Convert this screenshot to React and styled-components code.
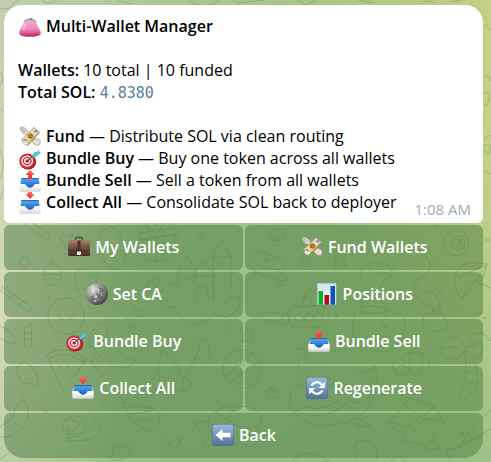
import React from "react";
import styled, { createGlobalStyle, css } from "styled-components";

const GlobalStyle = createGlobalStyle`
  * { box-sizing: border-box; }
  body {
    margin: 0;
    font-family: "Open Sans", "Noto Sans", sans-serif;
    font-size: 16px;
    line-height: 22px;
    color: #000;
  }
`;

const Chat = styled.main`
  position: relative;
  isolation: isolate;
  min-height: 100vh;
  padding: 5px 8px 4px 4px;
  overflow: hidden;
  background:
    radial-gradient(ellipse 60% 60% at 48% 60%, rgba(152, 192, 142, 0.85), rgba(152, 192, 142, 0)),
    linear-gradient(to bottom, rgba(152, 194, 142, 0) 45%, rgba(148, 190, 136, 0.85)),
    linear-gradient(to right, #c3d0b0 0%, #a8c792 35%, #a9c584 65%, #c4d087 100%);
`;

const Wash = styled.div`
  position: absolute;
  z-index: -2;
  inset: 0;
  background: radial-gradient(ellipse 28% 62% at 0 68%, rgba(222, 222, 190, 0.85), rgba(222, 222, 190, 0));
`;

const Doodles = styled.svg`
  position: absolute;
  z-index: -1;
  inset: 0;
  width: 100%;
  height: 100%;
  fill: none;
  stroke: #55893e;
  stroke-width: 1;
  stroke-linecap: round;
  stroke-linejoin: round;
  opacity: 0.34;
`;

const Bubble = styled.article`
  display: flex;
  align-items: flex-end;
  justify-content: space-between;
  padding: 10px 12px 4px 14px;
  border-radius: 18px 18px 6px 6px;
  background: #fff;
`;

const Title = styled.h1`
  margin: 0 0 22px;
  font-size: 16px;
  line-height: 22px;
  font-weight: 600;
`;

const Line = styled.p`
  margin: 0;
`;

const Actions = styled.ul`
  margin: 22px 0 0;
  padding: 0;
  list-style: none;
`;

const Strong = styled.strong`
  font-weight: 600;
`;

const Amount = styled.code`
  font-family: "DejaVu Sans Mono", monospace;
  font-size: 15px;
  line-height: 16px;
  color: #5a7d99;
`;

const Time = styled.time`
  flex: none;
  font-size: 15px;
  line-height: 20px;
  color: #a0acb6;
`;

const Keyboard = styled.div`
  display: grid;
  grid-template-columns: 1fr 1fr;
  gap: 2px;
  margin-top: 2px;
`;

const Key = styled.button`
  display: flex;
  align-items: center;
  justify-content: center;
  height: 45px;
  padding: 0 0 2px;
  border: 0;
  border-radius: 6px;
  background: rgba(80, 126, 66, 0.52);
  color: #fff;
  font: inherit;
  font-weight: 600;
  cursor: pointer;
  ${(p) =>
    p.$wide &&
    css`
      grid-column: 1 / -1;
      border-radius: 6px 6px 20px 20px;
    `}
`;

const Emoji = styled.svg`
  width: 22px;
  height: 22px;
  margin: 0 5px 0 1px;
  vertical-align: top;
  flex: none;
`;

const Body = styled.div`
  padding-bottom: 6px;

  ${Emoji} {
    margin-block: 1px -1px;
  }
`;

const gradients = {
  pink: ["#f7a3cd", "#ef8dbf", "#c82f6c"],
  pinkLow: ["#e66ba5", "#d8417f", "#b82d63"],
  tray: ["#64b1f5", "#3587dc", "#1d5cab"],
  shell: ["#ffffff", "#f4f1ef", "#d5d3d4"],
  red: ["#ff6d60", "#f8453e", "#e43a34"],
  brown: ["#8f6a57", "#69483a", "#472e26"],
  flap: ["#aa8370", "#7d5a49", "#5f4135"],
  key: ["#9bb7d7", "#7897bf", "#557499"],
  chart: ["#d3e2ef", "#e6edf7", "#dfe4ee"],
};

const Gradients = () => (
  <defs>
    {Object.entries(gradients).map(([id, c]) => (
      <linearGradient key={id} id={id} x1="0" y1="0" x2="0" y2="1">
        <stop offset="0" stopColor={c[0]} />
        <stop offset="0.5" stopColor={c[1]} />
        <stop offset="1" stopColor={c[2]} />
      </linearGradient>
    ))}
    <radialGradient id="moon" cx="0.32" cy="0.28" r="0.8">
      <stop offset="0" stopColor="#d0d0cf" />
      <stop offset="0.5" stopColor="#929292" />
      <stop offset="1" stopColor="#3c3c40" />
    </radialGradient>
  </defs>
);

const arrows = {
  up: "M11 0 15 4.2Q15.2 5 14.5 5H13V9H9V5H7.5Q6.8 5 7 4.2Z",
  down: "M9 0H13V2H14.5Q15.3 2 15 2.8L11 7 7 2.8Q6.7 2 7.5 2H9Z",
};

const Tray = ({ dir }) => (
  <>
    <path d="M3 8H19L21.5 14V20Q21.5 21.5 20 21.5H2Q.5 21.5 .5 20V14Z" fill="url(#shell)" />
    <path d="M2.5 8H19.5L20.5 14H16L14 16.5Q11 19 8 16.5L6 14H1.5Z" fill="url(#tray)" />
    <path d="M2.5 8H19.5L19.8 9.2H2.2Z" fill="#2f6cad" />
    <path d="M.5 14H5.5L8 16.8Q11 19.3 14 16.8L16.5 14H21.5V20Q21.5 21.5 20 21.5H2Q.5 21.5 .5 20Z" fill="url(#shell)" />
    <path d={arrows[dir]} fill="url(#red)" />
  </>
);

const art = {
  purse: (
    <>
      <path d="M5 7Q5.500 4 10 3.500H12Q16.500 4 17 7" fill="#e9c4d5" stroke="#a29a9d" strokeWidth="1.300" />
      <circle cx="10" cy="3.300" r="1.200" fill="#aaa6a8" />
      <circle cx="12.200" cy="3.300" r="1.200" fill="#858285" />
      <path d="M5 6Q11 3.500 17 6Q17.600 9 20 12Q23 17 20.500 19Q18 20.500 11 20.500T1.500 19Q-1 17 2 12Q4.500 9 5 6Z" fill="url(#pink)" />
      <path d="M.5 15.500Q3 17.300 11 17.300T21.500 15.500Q22 18 20.500 19Q18 20.500 11 20.500T1.500 19Q0 18 .5 15.500Z" fill="url(#pinkLow)" />
      <path d="M6.500 7.500Q6 11 4 13.500" stroke="#fcc5df" strokeWidth="1.500" fill="none" />
    </>
  ),
  money: (
    <>
      <path d="M10 7Q8.500 2 3 .8Q.8 .5 1.500 2Q.5 3 2 4Q1.500 5.500 3 6Q3.500 8 7 8.500Z" fill="#e0dccf" stroke="#9d9889" strokeWidth=".6" />
      <path d="M2 2.500Q5 3 7 5.500M2.500 4.500Q4.500 5 6 6.500" stroke="#8e8a7c" strokeWidth=".6" fill="none" />
      <path d="M13 15Q15 20 19 19.500Q20.500 19.500 20.200 18.200Q22 17.500 21 16Q22 14.500 20 13.500L15 12Z" fill="#e3decf" stroke="#9d9889" strokeWidth=".6" />
      <path d="M2.500 14.500 15 1.500 21 6.500 8.500 20Z" fill="#8f8a72" />
      <path d="M2.500 13.500 15 1.500 20.500 6 8 18.500Z" fill="#dad7c6" stroke="#8b8569" strokeWidth=".5" />
      <ellipse cx="6" cy="14.300" rx="1.600" ry="1.200" fill="#99937a" />
      <ellipse cx="16.800" cy="5.300" rx="1.600" ry="1.200" fill="#99937a" />
      <path d="M7 9.300 10.500 6 16 10.500V12.500L12.500 15.800 7 11Z" fill="#f0bf55" />
      <path d="M12.500 13.500 16 10.500V12.500L12.500 15.800Z" fill="#bd882f" />
      <circle cx="11.500" cy="10" r="1.900" fill="none" stroke="#58492a" strokeWidth="1" />
      <path d="M10.500 11 12.500 9" stroke="#58492a" strokeWidth="1" />
      <path d="M6.500 15Q3.500 13.500 3.500 16.500Q3.500 18.500 5.500 18.300Q6.500 19.500 8.500 18.500L9.500 16.500Z" fill="#ece8dd" stroke="#aaa596" strokeWidth=".5" />
    </>
  ),
  target: (
    <>
      <ellipse cx="9" cy="13.800" rx="8.200" ry="7.600" fill="#8e1a21" />
      <ellipse cx="8.200" cy="13" rx="8" ry="7.600" fill="#dc2a32" />
      <ellipse cx="8.200" cy="13" rx="5.900" ry="5.600" fill="#fff" />
      <ellipse cx="8.200" cy="13" rx="4.600" ry="4.300" fill="#d8252e" />
      <ellipse cx="8.200" cy="13" rx="3.200" ry="3" fill="#fff" />
      <ellipse cx="8.200" cy="13" rx="1.900" ry="1.800" fill="#c21f28" />
      <path d="M8.500 12.800 16 6.500" stroke="#4b5f6b" strokeWidth="1.200" />
      <path d="M13 7.500 15.500 4.500 18.500 3.500 20.500 1.500 20 4 22 4.300 19.500 6.500 17 8.500 13.500 9.500Z" fill="#39afc1" />
      <path d="M14 8.300 19.800 4" stroke="#9be4eb" strokeWidth="1" />
    </>
  ),
  outbox: <Tray dir="up" />,
  inbox: <Tray dir="down" />,
  briefcase: (
    <>
      <path d="M7.500 5V2.500Q7.500 1.500 9 1.500H13Q14.500 1.500 14.500 2.500V5" fill="none" stroke="#62473a" strokeWidth="1.400" />
      <path d="M2 4.500H20Q21.500 4.500 21.600 6L22 18.500Q22 20 20.500 20H1.500Q0 20 0 18.500L.4 6Q.5 4.500 2 4.500Z" fill="url(#brown)" />
      <path d="M2 4.500H20Q21.500 4.500 21.600 6L21.700 12Q21.500 14 19 14.500H3Q.5 14 .3 12L.4 6Q.5 4.500 2 4.500Z" fill="url(#flap)" />
      <path d="M.3 13Q.8 14.500 3 14.800H19Q21.200 14.500 21.700 13" fill="none" stroke="#422a22" strokeWidth=".8" />
      <path d="M9.500 4.500H12.500V13H9.500Z" fill="#513529" />
      <path d="M8.500 13.500H13.500V15.500H8.500Z" fill="#34221d" />
      <path d="M9 15.500H13V18Q13 19 12 19H10Q9 19 9 18Z" fill="#e9edf4" />
    </>
  ),
  moon: (
    <>
      <circle cx="11" cy="11" r="11" fill="url(#moon)" />
      <path d="M7 2Q4 4 5.500 6.500T4 11Q7 12 8.500 9T12 5.500Q10 4 9 4Z" fill="#e5e5e3" opacity=".5" />
      <path d="M12.500 4 16 5 18 8 16 10 13.500 8Z M10 10 14 11 17 14 14 17 11.500 14Z M4 13 7 13.500 8.500 17 6 18Z" fill="#55565a" opacity=".5" />
      <g fill="#efefec" opacity=".75">
        <circle cx="12.500" cy="7" r="1" />
        <circle cx="10" cy="13.500" r="1.100" />
        <circle cx="6" cy="8" r=".8" />
        <circle cx="15.500" cy="12" r=".7" />
        <circle cx="9" cy="18" r=".9" />
      </g>
    </>
  ),
  chart: (
    <>
      <path d="M1.500 .5H20V21.500H1.500Z" fill="url(#chart)" stroke="#b9cad8" strokeWidth=".6" />
      <path d="M2.500 8H7V21.700H2.500Z" fill="#08b325" />
      <path d="M8.500 12H13V21.700H8.500Z" fill="#b50d14" />
      <path d="M14.500 3H19V21.700H14.500Z" fill="#0c55b8" />
    </>
  ),
  refresh: (
    <>
      <rect width="22" height="22" rx="3" fill="#52708f" />
      <rect x=".6" y=".6" width="20.800" height="20.400" rx="2.600" fill="url(#key)" />
      <g fill="none" stroke="#fff" strokeWidth="2.300">
        <path d="M5.300 8.500Q10.500 2.200 16 7.800" />
        <path d="M16.700 13.500Q11.500 19.800 6 14.200" />
      </g>
      <path d="M18.800 4.800V11H12.800Z M3.200 17.200V11H9.200Z" fill="#fff" />
    </>
  ),
  back: (
    <>
      <rect width="22" height="22" rx="3" fill="#52708f" />
      <rect x=".6" y=".6" width="20.800" height="20.400" rx="2.600" fill="url(#key)" />
      <path d="M3.500 11 10.500 5V8.700H18.500V13.300H10.500V17Z" fill="#fff" />
    </>
  ),
};

const Icon = ({ name }) => (
  <Emoji viewBox="0 0 22 22" aria-hidden="true">
    {art[name]}
  </Emoji>
);

const actions = [
  ["money", "Fund", "Distribute SOL via clean routing"],
  ["target", "Bundle Buy", "Buy one token across all wallets"],
  ["outbox", "Bundle Sell", "Sell a token from all wallets"],
  ["inbox", "Collect All", "Consolidate SOL back to deployer"],
];

const keys = [
  ["briefcase", "My Wallets"],
  ["money", "Fund Wallets"],
  ["moon", "Set CA"],
  ["chart", "Positions"],
  ["target", "Bundle Buy"],
  ["outbox", "Bundle Sell"],
  ["inbox", "Collect All"],
  ["refresh", "Regenerate"],
  ["back", "Back", true],
];

const Wallpaper = () => (
  <Doodles viewBox="0 0 491 462" preserveAspectRatio="xMidYMid slice" aria-hidden="true">
    <Gradients />
    {/* edges */}
    <path d="M0 8Q9 12 14 3L19 0M42 0Q48 7 57 0M118 0 132 4M188 0Q205 12 219 0M237 3 264 0M298 0 306 5 316 0M358 0 374 3M421 4Q425-2 434 3M450 2 462 0M0 72Q6 78 0 86M0 108 4 112M0 150Q7 166 0 178M0 200 4 190" />
    <path d="M485 25 491 30M484 78Q490 72 491 82M484 93Q492 91 489 100T484 105M484 140Q491 130 491 139M483 146Q494 140 489 154L483 150M484 170 491 174M486 240A2 2 0 1 0 490 240 2 2 0 1 0 486 240" />
    {/* candy canes */}
    <path d="M21 221 47 240Q51 238 49 234L27 219M0 290 28 312Q33 309 29 305L2 287M11 297 15 293M20 304 24 300" />
    {/* spiral, star, bottle */}
    <path d="M24 266Q29 265 29 260T23 257Q18 260 21 266T32 263M62 234 67 237 73 234 71 240 76 244 69 244 66 249 64 242 60 239ZM93 234 105 225M99 247Q94 236 105 229T121 237L126 256Q125 266 115 270L106 263ZM102 251 121 242" />
    {/* gift */}
    <path d="M142 239 176 235 171 260 146 261ZM139 233 176 228 177 234 141 240ZM155 233 157 261M164 231 163 260M157 231Q143 228 148 223T160 231Q165 218 172 221T161 231" />
    {/* cupcake, gingerbread man, planet */}
    <path d="M44 274Q43 265 52 264T61 274ZM44 275Q44 286 53 285T61 275M50 263Q50 260 54 261M47 279 58 279M75 279Q74 270 82 269T90 278Q97 272 98 278T89 284Q94 291 87 292L82 287Q75 291 75 285T80 282M80 276 81 276M85 276 86 276M148 283Q150 274 157 277T154 288 147 283M142 287Q149 286 158 275" />
    {/* castle */}
    <path d="M178 286V271L187 256 196 270V284M176 271H197M193 285V276L203 260 214 276V301M191 276H216M213 299V257L221 240 231 257V290M210 257H233M195 301V292Q202 278 208 292V301M218 264A2 2 0 1 0 222 264 2 2 0 1 0 218 264M185 277A2 2 0 1 0 189 277M179 284Q160 283 161 297 160 309 175 307 179 322 192 324 208 324 213 313 226 321 234 313 242 307 239 297 229 295 224 303" />
    {/* face, moon, Zs, butterfly */}
    <circle cx="66" cy="316" r="18" />
    <path d="M58 308V309M70 306V307M58 316Q67 327 76 312M101 322Q117 334 95 348 85 348 92 332ZM125 319 134 319 128 327 137 326M133 311H141L136 317H143M91 346Q112 339 121 352T138 358Q128 371 119 367T101 377L91 361 101 357Z" />
    {/* ice-cream, pizza, fish */}
    <path d="M25 328 32 323 31 346 25 347ZM25 333H32M25 339H32M47 355Q64 343 87 359L63 390ZM49 359Q66 349 84 362M60 365A4 4 0 1 0 68 365M20 364Q28 360 34 370T38 387L31 384Q18 384 17 370ZM22 369 23 369M0 326Q13 331 15 340T0 338" />
    {/* rocket, balloon man */}
    <path d="M162 350Q183 364 184 390L162 393Q155 365 162 350ZM158 373 150 383 157 391 162 385M184 377 192 383 186 392M168 375A5 5 0 1 0 178 375 5 5 0 1 0 168 375M181 383 195 358 200 349M200 349Q195 344 201 340T209 346L211 355 203 364 199 357 194 360Z" />
    {/* banana, snail, drumstick, strawberry */}
    <path d="M23 399Q34 414 24 426T1 437M23 399Q13 407 13 418L0 427M65 421Q76 410 83 422T74 434Q63 436 63 426T73 420 74 430 68 425M68 438Q91 435 95 419L101 423Q101 438 87 440L68 441ZM122 402Q137 407 150 408T158 426L151 431Q136 429 129 414ZM125 408 143 406M130 414 151 411M135 421 157 419M157 430 170 443 180 437Q181 447 173 449L168 443M113 450Q115 443 126 447T127 456Q120 463 112 459ZM123 447 132 441" />
    {/* spaceship, candy, star */}
    <path d="M252 256Q259 247 276 257T277 275M250 259Q245 269 263 275T285 281 277 269M251 259Q263 271 279 269M256 270 253 280M277 279 281 286M265 260A2 2 0 1 0 269 260 2 2 0 1 0 265 260M274 240Q283 243 284 235T275 230 271 238 280 237M303 254 309 256 308 267 302 265ZM303 259H309M335 255 339 259 345 257 343 262 347 266 340 265 335 269 336 262Z" />
    {/* dinosaur, ball, umbrella */}
    <path d="M360 278Q360 265 370 263T389 266 383 281L379 292 387 313H361L366 288 360 282M370 269V271M379 273 387 273M396 258Q416 242 426 256T421 277 427 291 438 290 437 299 426 304 414 286M355 311Q365 302 388 309T404 330Q406 346 386 352L361 350 352 331Z" />
    <circle cx="456" cy="243" r="13" />
    <circle cx="458" cy="243" r="7" />
    <path d="M456 240Q459 237 461 240T457 243Q454 246 458 247T461 243 456 240M457 272Q463 259 487 264 484 278 476 286L461 299Q451 285 457 272M459 277Q469 273 487 264Q474 283 461 299M475 281 491 288" />
    {/* submarine */}
    <path d="M288 312Q290 306 303 307L317 305Q330 307 329 318L319 327H292ZM283 311 288 315 289 322 282 325ZM303 307V298H311V305M305 298Q304 289 311 290M262 313 267 312 271 314 276 312 281 315M264 321 269 319 273 322 278 320" />
    <circle cx="299" cy="318" r="4" />
    <circle cx="309" cy="317" r="4" />
    <circle cx="319" cy="317" r="4" />
    <circle cx="336" cy="316" r="2" />
    {/* tomato, palm */}
    <path d="M434 314Q422 310 423 322T439 331 442 314ZM434 314 432 309 437 312 442 308 439 315M466 348Q458 334 447 338L440 349 458 346 446 359Q460 361 465 350L477 358Q487 350 480 342L468 348 472 335Q483 329 491 341M465 350 466 373 460 399M474 355 478 379 476 392 463 400M465 362 476 362M466 372 477 373M466 382 476 383" />
    {/* whale */}
    <path d="M290 409Q286 385 309 382T349 400L358 403Q374 402 372 379 365 381 358 369L368 374 374 364Q382 384 370 404 361 421 335 425T290 409M293 402Q319 416 338 400M295 410Q318 424 346 404M352 414Q363 421 371 426 357 430 350 420M335 407 338 410M294 352Q300 346 305 350T302 359Q294 364 303 370T312 379M266 391Q272 385 278 391T273 398 268 392 273 392" />
    {/* cratered planet and turtle */}
    <circle cx="242" cy="369" r="19" />
    <path d="M225 377 253 353M230 383 260 361M236 370A3 3 0 1 0 240 370M208 420Q216 405 239 406T262 420L256 434 235 444 213 439ZM207 421 195 424Q200 435 211 432M217 413 228 420 221 438M235 407 228 420 245 430 259 425M245 430 239 443M217 440 205 449 203 441" />
    {/* pumpkin, treasure box */}
    <path d="M406 365Q397 353 411 352T429 359 422 374M413 352Q405 362 412 374M420 352Q426 361 419 375M392 365Q392 362 397 363L410 369Q409 376 397 376ZM389 422 410 398 435 407 444 422 426 446 404 441ZM389 422 406 427 435 407M406 427 404 441M412 432 424 418 444 422M405 389H412M412 394H419M404 405 408 408M411 410 415 413M427 444Q434 438 439 444T428 449" />
    {/* bottom */}
    <path d="M357 459Q351 441 361 440T377 452L377 460M293 462Q306 445 329 462M391 462Q398 451 407 462M451 460Q441 447 458 448L478 421 491 410M458 448 491 429M0 459 8 454M245 331H253V341H243ZM248 336H249" />
    <g>
      <circle cx="200" cy="238" r="2" />
      <circle cx="49" cy="298" r="1" />
      <circle cx="231" cy="328" r="2" />
      <circle cx="102" cy="403" r="2" />
      <circle cx="45" cy="411" r="2" />
      <circle cx="218" cy="402" r="1" />
      <circle cx="384" cy="326" r="2" />
      <circle cx="445" cy="387" r="1" />
      <circle cx="358" cy="425" r="2" />
      <circle cx="462" cy="433" r="1" />
      <circle cx="484" cy="318" r="1" />
      <circle cx="437" cy="226" r="1" />
    </g>
  </Doodles>
);

export default function App() {
  return (
    <Chat>
      <GlobalStyle />
      <Wash />
      <Wallpaper />
      <Bubble>
        <Body>
          <Title>
            <Icon name="purse" />
            Multi-Wallet Manager
          </Title>
          <Line>
            <Strong>Wallets:</Strong> 10 total | 10 funded
          </Line>
          <Line>
            <Strong>Total SOL:</Strong> <Amount>4.8380</Amount>
          </Line>
          <Actions>
            {actions.map(([icon, name, text]) => (
              <li key={name}>
                <Icon name={icon} />
                <Strong>{name}</Strong> — {text}
              </li>
            ))}
          </Actions>
        </Body>
        <Time dateTime="01:08">1:08 AM</Time>
      </Bubble>
      <Keyboard>
        {keys.map(([icon, label, wide]) => (
          <Key key={label} type="button" $wide={wide}>
            <Icon name={icon} />
            {label}
          </Key>
        ))}
      </Keyboard>
    </Chat>
  );
}
